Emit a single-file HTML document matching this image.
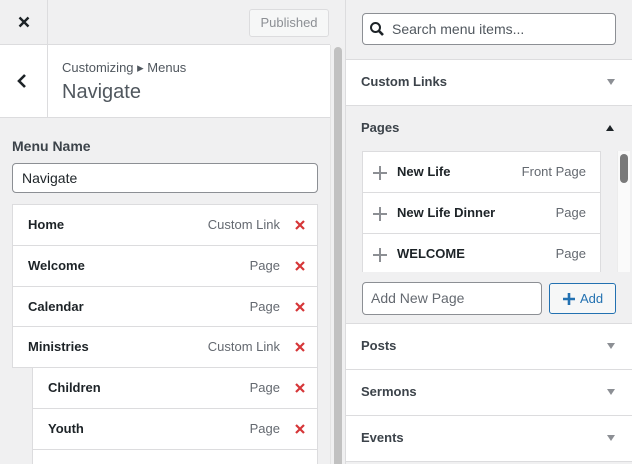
<!DOCTYPE html>
<html style="width:632px;height:464px;overflow:hidden"><head><style>
*{box-sizing:border-box;margin:0;padding:0}
body{width:632px;height:464px;overflow:hidden;background:#f0f0f1;font-family:"Liberation Sans",sans-serif;color:#1d2327;position:relative}
.a{position:absolute}
.row{position:absolute;background:#fff;border:1px solid #dcdcde;font-size:13px}
.row b{position:absolute;left:15px;top:12px;font-weight:bold}
.row .t{position:absolute;right:37px;top:12px;color:#646970}
.row svg{position:absolute;right:12px;top:15px}
.sec{position:absolute;left:346px;width:286px;background:#fff;border-bottom:1px solid #dcdcde;font-size:13px;font-weight:bold;color:#3c434a}
.sec span{position:absolute;left:15px;top:14px}
.sec i{position:absolute;right:17px;top:19px;width:0;height:0;border-left:4px solid transparent;border-right:4px solid transparent;border-top:6px solid #8c8f94}
.pi{position:absolute;left:0;width:238px;height:41px;border-bottom:1px solid #dcdcde;font-size:13px}
.pi svg{position:absolute;left:10px;top:14px}
.pi b{position:absolute;left:34px;top:12px}
.pi .t{position:absolute;right:15px;top:12px;color:#646970}
</style></head><body>
<div class="a" style="left:0;top:0;width:330px;height:45px;border-bottom:1px solid #dcdcde"></div>
<div class="a" style="left:47px;top:0;width:1px;height:44px;background:#dcdcde"></div>
<svg class="a" style="left:18px;top:16px" width="12" height="12"><path d="M1.5 1.5l9 9M10.5 1.5l-9 9" stroke="#1d2327" stroke-width="2.4"/></svg>
<div class="a" style="left:249px;top:9px;width:80px;height:28px;border:1px solid #dcdcde;border-radius:3px;background:#f6f7f7;color:#8c8f94;font-size:13px;text-align:center;line-height:26px">Published</div>
<div class="a" style="left:0;top:45px;width:330px;height:73px;background:#fff;border-bottom:1px solid #dcdcde"></div>
<div class="a" style="left:47px;top:45px;width:1px;height:72px;background:#dcdcde"></div>
<svg class="a" style="left:16px;top:73px" width="12" height="16"><path d="M9 2L3 8l6 6" stroke="#1d2327" stroke-width="2.6" fill="none"/></svg>
<div class="a" style="left:62px;top:60px;font-size:13px;color:#50575e">Customizing ▸ Menus</div>
<div class="a" style="left:62px;top:81px;font-size:20px;color:#50575e">Navigate</div>
<div class="a" style="left:330px;top:45px;width:15px;height:419px;background:#f0f0f1;border-left:1px solid #e4e4e4"></div>
<div class="a" style="left:334px;top:47px;width:8px;height:417px;background:#c1c1c1;border-radius:4px 4px 0 0"></div>
<div class="a" style="left:12px;top:138px;font-size:14px;font-weight:bold;color:#3c434a">Menu Name</div>
<div class="a" style="left:12px;top:163px;width:306px;height:30px;border:1px solid #8c8f94;border-radius:4px;background:#fff;font-size:14px;padding:6px 9px">Navigate</div>
<div class="row" style="left:12px;top:204px;width:306px;height:42px"><b>Home</b><span class="t">Custom Link</span><svg width="10" height="10"><path d="M1 1l8 8M9 1l-8 8" stroke="#d63638" stroke-width="2.2"/></svg></div>
<div class="row" style="left:12px;top:245px;width:306px;height:42px"><b>Welcome</b><span class="t">Page</span><svg width="10" height="10"><path d="M1 1l8 8M9 1l-8 8" stroke="#d63638" stroke-width="2.2"/></svg></div>
<div class="row" style="left:12px;top:286px;width:306px;height:41px"><b>Calendar</b><span class="t">Page</span><svg width="10" height="10"><path d="M1 1l8 8M9 1l-8 8" stroke="#d63638" stroke-width="2.2"/></svg></div>
<div class="row" style="left:12px;top:326px;width:306px;height:42px"><b>Ministries</b><span class="t">Custom Link</span><svg width="10" height="10"><path d="M1 1l8 8M9 1l-8 8" stroke="#d63638" stroke-width="2.2"/></svg></div>
<div class="row" style="left:32px;top:367px;width:286px;height:42px"><b>Children</b><span class="t">Page</span><svg width="10" height="10"><path d="M1 1l8 8M9 1l-8 8" stroke="#d63638" stroke-width="2.2"/></svg></div>
<div class="row" style="left:32px;top:408px;width:286px;height:42px"><b>Youth</b><span class="t">Page</span><svg width="10" height="10"><path d="M1 1l8 8M9 1l-8 8" stroke="#d63638" stroke-width="2.2"/></svg></div>
<div class="row" style="left:32px;top:449px;width:286px;height:15px;border-bottom:none"></div>
<div class="a" style="left:345px;top:0;width:1px;height:464px;background:#dcdcde"></div>
<div class="a" style="left:362px;top:13px;width:254px;height:32px;border:1px solid #8c8f94;border-radius:4px;background:#fff"></div>
<svg class="a" style="left:369px;top:21px" width="16" height="16"><circle cx="6.5" cy="6.5" r="4.5" stroke="#1d2327" stroke-width="2" fill="none"/><path d="M10 10l4 4" stroke="#1d2327" stroke-width="2.6"/></svg>
<div class="a" style="left:392px;top:21px;font-size:14px;color:#50575e">Search menu items...</div>
<div class="sec" style="top:59px;height:47px;border-top:1px solid #dcdcde"><span>Custom Links</span><i></i></div>
<div class="a" style="left:361px;top:120px;font-size:13px;font-weight:bold;color:#3c434a">Pages</div>
<div class="a" style="left:606px;top:125px;width:0;height:0;border-left:4px solid transparent;border-right:4px solid transparent;border-bottom:6px solid #1d2327"></div>
<div class="a" style="left:362px;top:151px;width:239px;height:121px;background:#fff;border:1px solid #dcdcde;border-bottom:none;overflow:hidden">
<div class="pi" style="top:0"><svg width="14" height="14"><path d="M7 0v14M0 7h14" stroke="#8c8f94" stroke-width="2"/></svg><b>New Life</b><span class="t">Front Page</span></div>
<div class="pi" style="top:41px"><svg width="14" height="14"><path d="M7 0v14M0 7h14" stroke="#8c8f94" stroke-width="2"/></svg><b>New Life Dinner</b><span class="t">Page</span></div>
<div class="pi" style="top:82px"><svg width="14" height="14"><path d="M7 0v14M0 7h14" stroke="#8c8f94" stroke-width="2"/></svg><b>WELCOME</b><span class="t">Page</span></div>
</div>
<div class="a" style="left:617px;top:151px;width:13px;height:121px;background:#fafafa;border-left:1px solid #ececec"></div>
<div class="a" style="left:620px;top:154px;width:8px;height:29px;background:#7a7a7a;border-radius:4px"></div>
<div class="a" style="left:362px;top:282px;width:180px;height:33px;border:1px solid #8c8f94;border-radius:4px;background:#fff;font-size:14px;color:#646970;padding:7px 8px">Add New Page</div>
<div class="a" style="left:549px;top:283px;width:67px;height:31px;border:1px solid #2271b1;border-radius:3px;background:#f6f7f7;color:#2271b1;font-size:13px;line-height:29px;padding-left:30px">Add</div>
<svg class="a" style="left:562px;top:292px" width="14" height="14"><path d="M7 1v12M1 7h12" stroke="#2271b1" stroke-width="2.6"/></svg>
<div class="sec" style="top:323px;height:47px;border-top:1px solid #dcdcde"><span>Posts</span><i></i></div>
<div class="sec" style="top:370px;height:46px"><span>Sermons</span><i></i></div>
<div class="sec" style="top:416px;height:46px"><span>Events</span><i></i></div>
</body></html>
